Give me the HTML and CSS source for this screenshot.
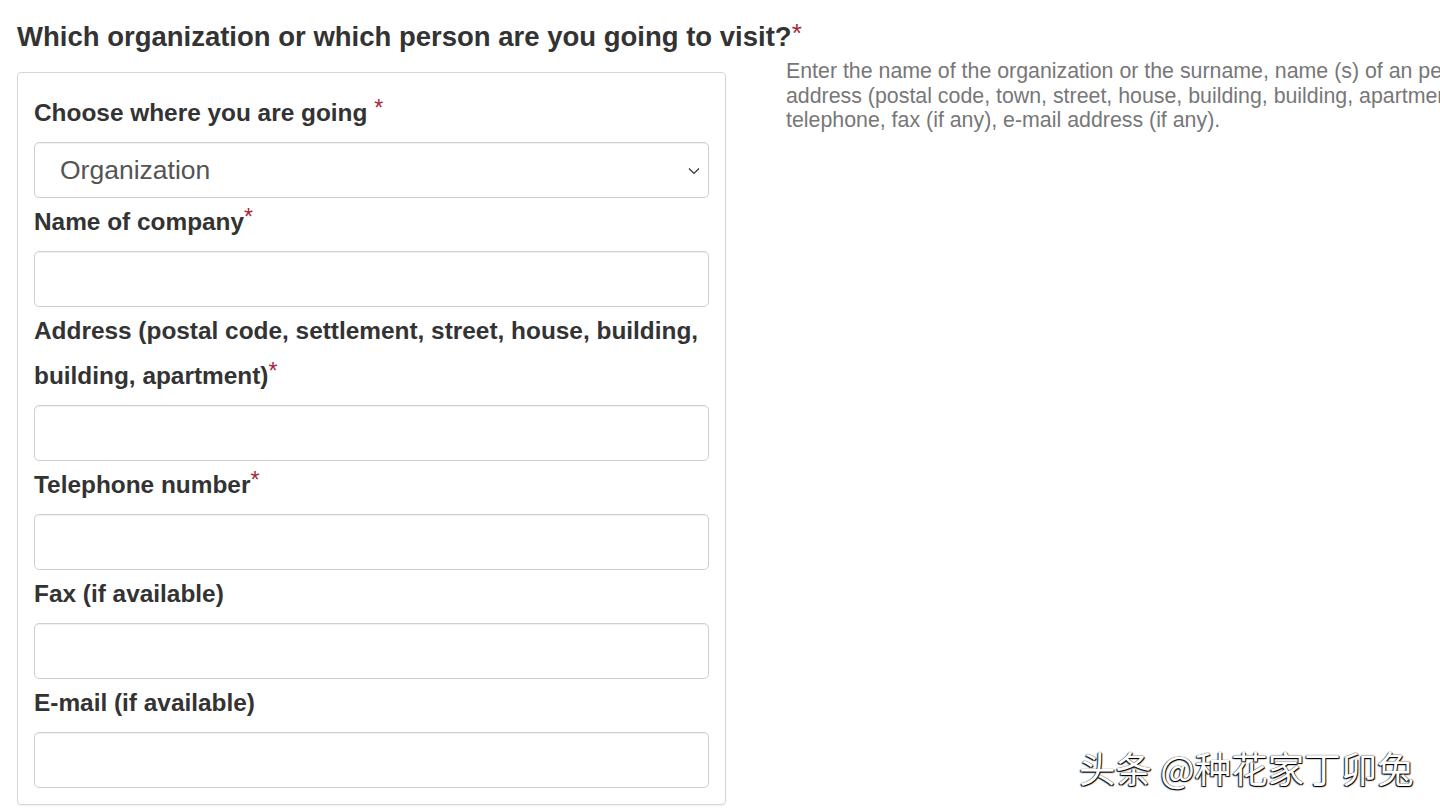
FILE: index.html
```html
<!DOCTYPE html>
<html lang="en">
<head>
<meta charset="utf-8">
<title>Visit form</title>
<link rel="stylesheet" href="styles.css">
</head>
<body>
<main class="page">
  <h2 class="question">Which organization or which person are you going to visit?<span class="req">*</span></h2>
  <div class="row">
    <section class="card">
      <div class="group">
        <label class="label">Choose where you are going <span class="req">*</span></label>
        <div class="select-wrap">
          <select class="control select">
            <option>Organization</option>
            <option>Person</option>
          </select>
          <svg class="chevron" width="12" height="8" viewBox="0 0 12 8"><path d="M1 1.5 L6 6.5 L11 1.5" fill="none" stroke="#333" stroke-width="1.2"/></svg>
        </div>
      </div>
      <div class="group">
        <label class="label">Name of company<span class="req">*</span></label>
        <input class="control" type="text">
      </div>
      <div class="group">
        <label class="label">Address (postal code, settlement, street, house, building, building, apartment)<span class="req">*</span></label>
        <input class="control" type="text">
      </div>
      <div class="group">
        <label class="label">Telephone number<span class="req">*</span></label>
        <input class="control" type="text">
      </div>
      <div class="group">
        <label class="label">Fax (if available)</label>
        <input class="control" type="text">
      </div>
      <div class="group">
        <label class="label">E-mail (if available)</label>
        <input class="control" type="text">
      </div>
    </section>
    <p class="help">Enter the name of the organization or the surname, name (s) of an person,<br>address (postal code, town, street, house, building, building, apartment),<br>telephone, fax (if any), e-mail address (if any).</p>
  </div>
</main>
<div class="watermark">头条 @种花家丁卯兔</div>
</body>
</html>
```
FILE: styles.css
```css
html, body {
  margin: 0;
  padding: 0;
  background: #fff;
  width: 1440px;
  height: 810px;
  overflow: hidden;
}
body {
  font-family: "Liberation Sans", Arial, sans-serif;
  color: #333;
  position: relative;
}
.page {
  padding: 22px 0 0 17px;
}
.question {
  margin: 0;
  font-size: 27.5px;
  line-height: 30px;
  font-weight: bold;
  color: #333;
  white-space: nowrap;
}
.req {
  color: #a52a3c;
  font-weight: normal;
  line-height: 0;
  vertical-align: 5px;
  font-size: 0.95em;
}
.question .req {
  vertical-align: 4px;
}
.row {
  display: flex;
  align-items: flex-start;
  gap: 60px;
  margin-top: 7px;
}
.card {
  flex: 0 0 auto;
  width: 675px;
  margin-top: 13px;
  padding: 17px 16px 16px 16px;
  border: 1px solid #d6d6d6;
  border-radius: 4px;
  box-shadow: 0 1px 2px rgba(0,0,0,0.05);
  display: flex;
  flex-direction: column;
  gap: 1px;
}
.group {
  display: flex;
  flex-direction: column;
}
.label {
  font-size: 24.4px;
  line-height: 45px;
  font-weight: bold;
  color: #333;
  margin-bottom: 7px;
}
.control {
  box-sizing: border-box;
  width: 675px;
  height: 56px;
  margin: 0;
  padding: 0 25px;
  border: 1px solid #cfcfcf;
  border-radius: 5px;
  background: #fff;
  box-shadow: inset 0 1px 1px rgba(0,0,0,0.06);
  font-family: "Liberation Sans", Arial, sans-serif;
  font-size: 26.5px;
  color: #555;
  outline: none;
}
.select-wrap {
  position: relative;
}
.select {
  appearance: none;
  -webkit-appearance: none;
  display: block;
}
.chevron {
  position: absolute;
  right: 9px;
  top: 25px;
}
.help {
  margin: 0;
  font-size: 21.35px;
  line-height: 24.5px;
  color: #777;
  white-space: nowrap;
}
.watermark {
  position: absolute;
  left: 1079px;
  top: 745px;
  font-family: "Noto Sans CJK SC", sans-serif;
  font-size: 36.5px;
  line-height: 46px;
  color: #fff;
  text-shadow: 1px 1px 1px #000, -1px 1px 1px #222, 0 0 1px #000;
  white-space: nowrap;
}
```
